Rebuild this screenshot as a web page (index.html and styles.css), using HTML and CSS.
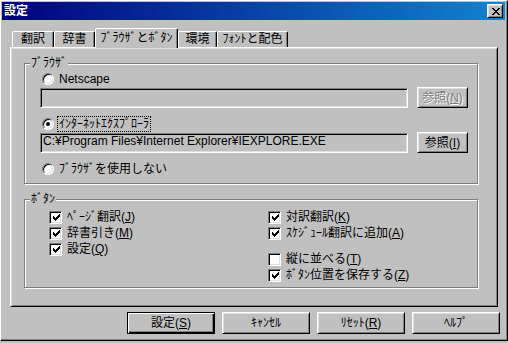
FILE: index.html
```html
<!DOCTYPE html>
<html lang="ja">
<head>
  <meta charset="UTF-8">
  <title>設定</title>
  <link rel="stylesheet" href="styles.css">
</head>
<body>
  <div class="window">
    <div class="titlebar">
      <span class="title">設定</span>
      <span class="close">
        <svg width="8" height="7" viewBox="0 0 8 7" shape-rendering="crispEdges">
          <path d="M0 0h2v1H0zM6 0h2v1H6zM1 1h2v1H1zM5 1h2v1H5zM2 2h4v1H2zM3 3h2v1H3zM2 4h4v1H2zM1 5h2v1H1zM5 5h2v1H5zM0 6h2v1H0zM6 6h2v1H6z" fill="#000"/>
        </svg>
      </span>
    </div>

    <div class="tabs">
      <div class="tab tab-1">翻訳</div>
      <div class="tab tab-2">辞書</div>
      <div class="tab tab-3 active">ﾌﾞﾗｳｻﾞとﾎﾞﾀﾝ</div>
      <div class="tab tab-4">環境</div>
      <div class="tab tab-5">ﾌｫﾝﾄと配色</div>
    </div>

    <div class="panel">
      <div class="group group-browser">
        <div class="group-title">ﾌﾞﾗｳｻﾞ</div>

        <div class="option first">
          <span class="radio"></span>
          <span class="opt-label">Netscape</span>
        </div>
        <div class="field-row">
          <div class="field"></div>
          <button class="btn btn-sm" disabled>参照(<u>N</u>)</button>
        </div>

        <div class="option spaced">
          <span class="radio checked"></span>
          <span class="opt-label focus">ｲﾝﾀｰﾈｯﾄｴｸｽﾌﾟﾛｰﾗ</span>
        </div>
        <div class="field-row">
          <div class="field">C:¥Program Files¥Internet Explorer¥IEXPLORE.EXE</div>
          <button class="btn btn-sm">参照(<u>I</u>)</button>
        </div>

        <div class="option spaced">
          <span class="radio"></span>
          <span class="opt-label">ﾌﾞﾗｳｻﾞを使用しない</span>
        </div>
      </div>

      <div class="group group-buttons">
        <div class="group-title">ﾎﾞﾀﾝ</div>
        <div class="cols">
          <div class="col col-left">
            <div class="check-row">
              <span class="check"><svg width="7" height="7" viewBox="0 0 7 7" shape-rendering="crispEdges"><path d="M6 0h1v1H6zM5 1h2v1H5zM0 2h1v1H0zM4 2h3v1H4zM0 3h2v1H0zM3 3h3v1H3zM0 4h5v1H0zM1 5h3v1H1zM2 6h1v1H2z"/></svg></span>
              <span class="check-label">ﾍﾟｰｼﾞ翻訳(<u>J</u>)</span>
            </div>
            <div class="check-row">
              <span class="check"><svg width="7" height="7" viewBox="0 0 7 7" shape-rendering="crispEdges"><path d="M6 0h1v1H6zM5 1h2v1H5zM0 2h1v1H0zM4 2h3v1H4zM0 3h2v1H0zM3 3h3v1H3zM0 4h5v1H0zM1 5h3v1H1zM2 6h1v1H2z"/></svg></span>
              <span class="check-label">辞書引き(<u>M</u>)</span>
            </div>
            <div class="check-row">
              <span class="check"><svg width="7" height="7" viewBox="0 0 7 7" shape-rendering="crispEdges"><path d="M6 0h1v1H6zM5 1h2v1H5zM0 2h1v1H0zM4 2h3v1H4zM0 3h2v1H0zM3 3h3v1H3zM0 4h5v1H0zM1 5h3v1H1zM2 6h1v1H2z"/></svg></span>
              <span class="check-label">設定(<u>Q</u>)</span>
            </div>
          </div>
          <div class="col col-right">
            <div class="check-row">
              <span class="check"><svg width="7" height="7" viewBox="0 0 7 7" shape-rendering="crispEdges"><path d="M6 0h1v1H6zM5 1h2v1H5zM0 2h1v1H0zM4 2h3v1H4zM0 3h2v1H0zM3 3h3v1H3zM0 4h5v1H0zM1 5h3v1H1zM2 6h1v1H2z"/></svg></span>
              <span class="check-label">対訳翻訳(<u>K</u>)</span>
            </div>
            <div class="check-row">
              <span class="check"><svg width="7" height="7" viewBox="0 0 7 7" shape-rendering="crispEdges"><path d="M6 0h1v1H6zM5 1h2v1H5zM0 2h1v1H0zM4 2h3v1H4zM0 3h2v1H0zM3 3h3v1H3zM0 4h5v1H0zM1 5h3v1H1zM2 6h1v1H2z"/></svg></span>
              <span class="check-label">ｽｹｼﾞｭｰﾙ翻訳に追加(<u>A</u>)</span>
            </div>
            <div class="check-row gap">
              <span class="check"></span>
              <span class="check-label">縦に並べる(<u>T</u>)</span>
            </div>
            <div class="check-row">
              <span class="check"><svg width="7" height="7" viewBox="0 0 7 7" shape-rendering="crispEdges"><path d="M6 0h1v1H6zM5 1h2v1H5zM0 2h1v1H0zM4 2h3v1H4zM0 3h2v1H0zM3 3h3v1H3zM0 4h5v1H0zM1 5h3v1H1zM2 6h1v1H2z"/></svg></span>
              <span class="check-label">ﾎﾞﾀﾝ位置を保存する(<u>Z</u>)</span>
            </div>
          </div>
        </div>
      </div>
    </div>

    <div class="actions">
      <button class="btn btn-lg default">設定(<u>S</u>)</button>
      <button class="btn btn-lg">ｷｬﾝｾﾙ</button>
      <button class="btn btn-lg">ﾘｾｯﾄ(<u>R</u>)</button>
      <button class="btn btn-lg">ﾍﾙﾌﾟ</button>
    </div>
  </div>
</body>
</html>
```

FILE: styles.css
```css
* {
  box-sizing: border-box;
}

body {
  margin: 0;
  background: #c0c0c0;
  font: 12px/14px "Liberation Sans", "Noto Sans CJK JP", sans-serif;
  color: #000;
}

u {
  text-decoration: underline;
  text-underline-offset: 1px;
}

.window {
  width: 508px;
  height: 341px;
  padding: 1px 2px 2px 1px;
  background: #c0c0c0;
  border: 1px solid;
  border-color: #fff #000 #000 #fff;
  box-shadow: inset -1px -1px #808080;
}

/* title bar */
.titlebar {
  height: 18px;
  display: flex;
  align-items: center;
  justify-content: space-between;
  padding: 0 2px;
  background: linear-gradient(to right, #000080, #1084d0);
  color: #fff;
  font-weight: bold;
}

.close {
  width: 16px;
  height: 14px;
  display: flex;
  align-items: center;
  justify-content: center;
  padding-left: 1px;
  background: #c0c0c0;
  border: 1px solid;
  border-color: #fff #000 #000 #fff;
  box-shadow: inset 1px 1px #dfdfdf, inset -1px -1px #808080;
}

/* tabs */
.tabs {
  display: flex;
  align-items: flex-end;
  height: 19px;
  margin: 8px 0 0 10px;
}

.tab {
  height: 16px;
  padding-top: 0;
  text-align: center;
  white-space: nowrap;
  background: #c0c0c0;
  border: 1px solid;
  border-bottom: 0;
  border-color: #fff #000 #000 #fff;
  border-radius: 2px 2px 0 0;
  box-shadow: inset -1px 0 #808080;
}

.tab-1 { width: 42px; }
.tab-2 { width: 41px; }
.tab-3 { width: 83px; }
.tab-4 { width: 39px; }
.tab-5 { width: 71px; }

.tab.active {
  height: 20px;
  margin-bottom: -1px;
  padding-top: 2px;
  position: relative;
  z-index: 1;
}

/* panel */
.panel {
  width: 488px;
  height: 260px;
  margin-left: 8px;
  padding: 15px 0 0 13px;
  border: 1px solid;
  border-color: #fff #000 #000 #fff;
  box-shadow: inset 1px 1px #dfdfdf, inset -1px -1px #808080;
}

.group {
  width: 454px;
  border: 1px solid #808080;
  box-shadow: inset 1px 1px #fff, 1px 1px #fff;
}

.group-browser {
  height: 121px;
}

.group-buttons {
  height: 89px;
  margin-top: 15px;
}

.group-title {
  width: fit-content;
  margin: -8px 0 0 5px;
  padding: 0 1px;
  background: #c0c0c0;
}

/* radio options */
.option {
  display: flex;
  align-items: center;
  height: 16px;
  padding-left: 17px;
}

.option.first {
  margin-top: 1px;
}

.option.spaced {
  margin-top: 8px;
}

.radio {
  width: 12px;
  height: 12px;
  display: flex;
  align-items: center;
  justify-content: center;
  border-radius: 50%;
  background: #fff;
  border: 1px solid;
  border-color: #808080 #fff #fff #808080;
  box-shadow: inset 1px 1px #000, inset -1px -1px #dfdfdf;
}

.radio.checked::after {
  content: "";
  width: 4px;
  height: 4px;
  border-radius: 50%;
  background: #000;
}

.opt-label {
  margin-left: 3px;
  padding: 0 1px;
  border: 1px dotted transparent;
  white-space: nowrap;
}

.opt-label.focus {
  border-color: #000;
}

/* text fields */
.field-row {
  display: flex;
  align-items: flex-start;
  height: 21px;
  padding-left: 15px;
}

.field {
  width: 368px;
  height: 20px;
  margin-top: 1px;
  padding: 0 2px;
  white-space: nowrap;
  overflow: hidden;
  background: #c0c0c0;
  border: 1px solid;
  border-color: #808080 #fff #fff #808080;
  box-shadow: inset 1px 1px #000, inset -1px -1px #dfdfdf;
}

/* buttons */
.btn {
  padding: 0;
  font: inherit;
  color: #000;
  text-align: center;
  white-space: nowrap;
  background: #c0c0c0;
  border: 1px solid;
  border-color: #fff #000 #000 #fff;
  box-shadow: inset 1px 1px #dfdfdf, inset -1px -1px #808080;
}

.btn:disabled {
  color: #808080;
  text-shadow: 1px 1px 0 #fff;
}

.btn-sm {
  width: 51px;
  height: 21px;
  margin-left: 9px;
}

.btn-lg {
  width: 88px;
  height: 22px;
}

.btn.default {
  border-color: #000;
  box-shadow: inset 1px 1px #fff, inset -1px -1px #000, inset -2px -2px #808080;
}

/* checkboxes */
.cols {
  display: flex;
  margin-top: 3px;
}

.col-left {
  width: 243px;
  padding-left: 24px;
}

.check-row {
  display: flex;
  align-items: center;
  height: 16px;
}

.check-row.gap {
  margin-top: 10px;
}

.check {
  width: 13px;
  height: 13px;
  flex-shrink: 0;
  display: flex;
  align-items: center;
  justify-content: center;
  background: #fff;
  border: 1px solid;
  border-color: #808080 #fff #fff #808080;
  box-shadow: inset 1px 1px #000, inset -1px -1px #dfdfdf;
}

.check svg {
  margin: 1px 0 0 1px;
}

.check-label {
  margin-left: 5px;
  white-space: nowrap;
}

/* bottom buttons */
.actions {
  display: flex;
  gap: 7px;
  margin: 5px 0 0 125px;
}
```
